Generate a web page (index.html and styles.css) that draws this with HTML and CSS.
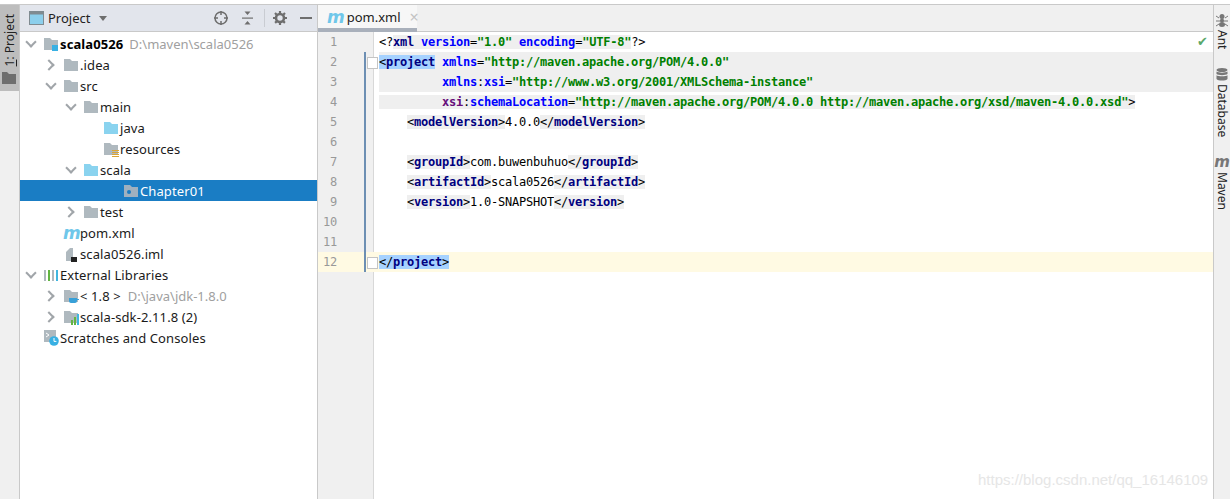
FILE: index.html
```html
<!DOCTYPE html>
<html lang="en">
  <head>
    <meta charset="UTF-8" />
    <title>pom.xml - scala0526</title>
    <link rel="stylesheet" href="styles.css">
  </head>
  <body>
    <svg class="defs" width="0" height="0">
      <symbol id="folder" viewBox="0 0 16 16"><path d="M1 2h6l2 2h6v10H1z" /></symbol>
    </svg>

    <div class="ide">
      <aside class="left-strip">
        <div class="strip-btn">
          <span class="strip-label"><u>1</u>: Project</span>
          <svg class="strip-folder" width="14" height="12" viewBox="0 0 14 12"><path d="M0 0h5l2 2h7v10H0z" fill="#6e6e6e" /></svg>
        </div>
      </aside>

      <section class="project">
        <header class="project-head">
          <svg class="head-view" width="15" height="14" viewBox="0 0 15 14"><rect x=".5" y=".5" width="14" height="13" fill="#8ccfec" stroke="#7f8b91" /><rect x="1" y="1" width="13" height="2.5" fill="#7f8b91" /></svg>
          <span class="head-title">Project</span>
          <svg class="head-caret" width="8" height="5" viewBox="0 0 8 5"><path d="M0 0h8L4 5z" fill="#6e6e6e" /></svg>
          <svg class="head-icon target" width="16" height="16" viewBox="0 0 16 16" fill="none" stroke="#6e6e6e" stroke-width="1.5"><circle cx="8" cy="8" r="6" /><path d="M8 1v4M8 11v4M1 8h4M11 8h4" /></svg>
          <svg class="head-icon collapse" width="13" height="14" viewBox="0 0 13 14"><path d="M1 6.5h11v1.2H1z" fill="#6e6e6e" /><path d="M3.5 0.5h6L6.5 4zM3.5 13.5h6L6.5 10z" fill="#6e6e6e" /></svg>
          <span class="head-sep"></span>
          <svg class="head-icon gear" width="14" height="14" viewBox="0 0 14 14"><circle cx="7" cy="7" r="4" fill="none" stroke="#6e6e6e" stroke-width="2.6" /><path d="M7 0v14M0 7h14M2 2l10 10M12 2L2 12" stroke="#6e6e6e" stroke-width="2.2" stroke-dasharray="2.4 9.2 2.4" /></svg>
          <span class="head-minus"></span>
        </header>

        <ul class="tree">
          <li class="row d0"><span class="arrow open"></span><span class="ico"><svg width="16" height="16"><use href="#folder" fill="#afb9bf" /><rect x="9" y="9" width="6" height="6" fill="#38b0e3" /></svg></span><b class="name">scala0526</b><span class="path">D:\maven\scala0526</span></li>
          <li class="row d1"><span class="arrow shut"></span><span class="ico"><svg width="16" height="16"><use href="#folder" fill="#afb9bf" /></svg></span><span class="name">.idea</span></li>
          <li class="row d1"><span class="arrow open"></span><span class="ico"><svg width="16" height="16"><use href="#folder" fill="#afb9bf" /></svg></span><span class="name">src</span></li>
          <li class="row d2"><span class="arrow open"></span><span class="ico"><svg width="16" height="16"><use href="#folder" fill="#afb9bf" /></svg></span><span class="name">main</span></li>
          <li class="row d3"><span class="arrow"></span><span class="ico"><svg width="16" height="16"><use href="#folder" fill="#8ad3ef" /></svg></span><span class="name">java</span></li>
          <li class="row d3"><span class="arrow"></span><span class="ico"><svg width="16" height="16"><use href="#folder" fill="#afb9bf" /><path d="M9 9h7v1H9zM9 11h7v1H9zM9 13h7v1H9zM9 15h7v1H9z" fill="#dba535" /></svg></span><span class="name">resources</span></li>
          <li class="row d2"><span class="arrow open"></span><span class="ico"><svg width="16" height="16"><use href="#folder" fill="#8ad3ef" /></svg></span><span class="name">scala</span></li>
          <li class="row d3 pkg selected"><span class="arrow"></span><span class="ico"><svg width="16" height="16"><use href="#folder" fill="#9fb0bf" /><circle cx="6" cy="9" r="2" fill="#1a7dc4" /></svg></span><span class="name">Chapter01</span></li>
          <li class="row d2"><span class="arrow shut"></span><span class="ico"><svg width="16" height="16"><use href="#folder" fill="#afb9bf" /></svg></span><span class="name">test</span></li>
          <li class="row d1"><span class="arrow"></span><span class="ico"><i class="m-icon">m</i></span><span class="name">pom.xml</span></li>
          <li class="row d1"><span class="arrow"></span><span class="ico"><svg width="16" height="16"><path d="M3 6l4-4h3v13H3z" fill="#afb9bf" /><rect x="8" y="11" width="6" height="5" fill="#222" /></svg></span><span class="name">scala0526.iml</span></li>
          <li class="row d0"><span class="arrow open"></span><span class="ico"><svg width="16" height="16"><path d="M1 3h2v11H1z" fill="#afb9bf" /><path d="M5 3h2v11H5z" fill="#62b543" /><path d="M9 3h2v11H9z" fill="#afb9bf" /><path d="M13 3h2v11h-2z" fill="#40b6e0" /></svg></span><span class="name">External Libraries</span></li>
          <li class="row d1"><span class="arrow shut"></span><span class="ico"><svg width="16" height="16"><use href="#folder" fill="#afb9bf" /><path d="M6 10h8v3a2 2 0 0 1-2 2H8a2 2 0 0 1-2-2zM14 11h2v1h-2z" fill="#38a0d8" /></svg></span><span class="name jdk">&lt; 1.8 &gt;</span><span class="path jdk-path">D:\java\jdk-1.8.0</span></li>
          <li class="row d1"><span class="arrow shut"></span><span class="ico"><svg width="16" height="16"><use href="#folder" fill="#afb9bf" /><path d="M8 11h2v5H8z" fill="#62b543" /><path d="M11 8h2v8h-2z" fill="#62b543" /><path d="M14 5h2v11h-2z" fill="#40b6e0" /></svg></span><span class="name">scala-sdk-2.11.8 (2)</span></li>
          <li class="row d0"><span class="arrow"></span><span class="ico"><svg width="16" height="16"><path d="M1 0h12v9H9v3H1z" fill="#afb9bf" /><path d="M3 3l3 2-3 2" fill="none" stroke="#fff" /><circle cx="11" cy="11" r="4.8" fill="#38b0e3" /><path d="M11 8v3.4h2.4" fill="none" stroke="#fff" /></svg></span><span class="name">Scratches and Consoles</span></li>
        </ul>
      </section>

      <main class="editor">
        <div class="tabs">
          <div class="tab"><i class="m-icon">m</i><span class="tab-name">pom.xml</span><span class="tab-close">&times;</span></div>
        </div>
        <div class="code">
          <span class="status-ok">&#10004;</span>
          <div class="line"><span class="num">1</span><pre><span class="pi">&lt;?</span><span class="hl"><b class="t">xml</b> <b class="a">version</b>=<b class="v">"1.0"</b> <b class="a">encoding</b>=<b class="v">"UTF-8"</b></span><span class="pi">?&gt;</span></pre></div>
          <div class="line bar full fold-top"><span class="num">2</span><pre><span class="sel"><span class="pi">&lt;</span><b class="t">project</b></span> <b class="a">xmlns</b>=<b class="v">"http://maven.apache.org/POM/4.0.0"</b></pre></div>
          <div class="line bar full"><span class="num">3</span><pre>         <b class="a">xmlns</b>:<b class="a">xsi</b>=<b class="v">"http://www.w3.org/2001/XMLSchema-instance"</b></pre></div>
          <div class="line bar"><span class="num">4</span><pre><span class="hl">         <b class="ns">xsi</b>:<b class="a">schemaLocation</b>=<b class="v">"http://maven.apache.org/POM/4.0.0 http://maven.apache.org/xsd/maven-4.0.0.xsd"</b>&gt;</span></pre></div>
          <div class="line bar"><span class="num">5</span><pre>    <span class="hl">&lt;<b class="t">modelVersion</b>&gt;</span>4.0.0<span class="hl">&lt;/<b class="t">modelVersion</b>&gt;</span></pre></div>
          <div class="line bar"><span class="num">6</span><pre> </pre></div>
          <div class="line bar"><span class="num">7</span><pre>    <span class="hl">&lt;<b class="t">groupId</b>&gt;</span>com.buwenbuhuo<span class="hl">&lt;/<b class="t">groupId</b>&gt;</span></pre></div>
          <div class="line bar"><span class="num">8</span><pre>    <span class="hl">&lt;<b class="t">artifactId</b>&gt;</span>scala0526<span class="hl">&lt;/<b class="t">artifactId</b>&gt;</span></pre></div>
          <div class="line bar"><span class="num">9</span><pre>    <span class="hl">&lt;<b class="t">version</b>&gt;</span>1.0-SNAPSHOT<span class="hl">&lt;/<b class="t">version</b>&gt;</span></pre></div>
          <div class="line bar"><span class="num">10</span><pre> </pre></div>
          <div class="line bar"><span class="num">11</span><pre> </pre></div>
          <div class="line bar caret fold-end"><span class="num">12</span><pre><span class="sel">&lt;/<b class="t">project</b>&gt;</span></pre></div>
        </div>
      </main>

      <aside class="right-strip">
        <div class="side-item ant">
          <svg width="12" height="13" viewBox="0 0 12 13" fill="#777"><ellipse cx="6" cy="2.5" rx="2.5" ry="2.5" /><ellipse cx="6" cy="6.5" rx="2" ry="2" /><ellipse cx="6" cy="10.5" rx="3" ry="2.5" /><path d="M0 2l3 2M12 2L9 4M0 7h12M0 12l3-2M12 12l-3-2" stroke="#777" /></svg>
          <span class="side-label">Ant</span>
        </div>
        <div class="side-item db">
          <svg width="12" height="13" viewBox="0 0 12 13" fill="#777"><ellipse cx="6" cy="2" rx="5.5" ry="2" /><path d="M.5 3.5C2 5 10 5 11.5 3.5V6C10 7.500 2 7.500.5 6zM.5 7.200C2 8.700 10 8.700 11.500 7.200V11C10 13 2 13 .5 11z" /></svg>
          <span class="side-label">Database</span>
        </div>
        <div class="side-item mvn">
          <i class="side-m">m</i>
          <span class="side-label">Maven</span>
        </div>
      </aside>
    </div>

    <div class="watermark">https://blog.csdn.net/qq_16146109</div>
  </body>
</html>
```

FILE: styles.css
```css
* {
  box-sizing: border-box;
  margin: 0;
  padding: 0;
}

html,
body {
  width: 1230px;
  height: 499px;
  overflow: hidden;
  background: #ffffff;
}

body {
  position: relative;
  padding-top: 4px;
  font-family: "Noto Sans", sans-serif;
  font-size: 13px;
  color: #1a1a1a;
}

.defs {
  position: absolute;
}

.ide {
  display: flex;
  height: 495px;
  border-top: 1px solid #c9c9c9;
}

/* Left tool strip */
.left-strip {
  flex: 0 0 20px;
  background: #f0f0f0;
  border-right: 1px solid #c9c9c9;
}

.strip-btn {
  height: 86px;
  background: #bdbdbd;
  display: flex;
  flex-direction: column;
  align-items: center;
  padding-top: 9px;
  gap: 6px;
}

.strip-label {
  writing-mode: vertical-rl;
  transform: rotate(180deg);
  font-size: 12px;
  line-height: 18px;
  color: #222;
}

.strip-folder {
  margin-right: 1px;
}

/* Project panel */
.project {
  flex: 0 0 298px;
  border-right: 1px solid #c9c9c9;
  background: #ffffff;
}

.project-head {
  height: 27px;
  background: #e2e5ec;
  border-bottom: 1px solid #c9c9c9;
  display: flex;
  align-items: center;
  padding-left: 9px;
}

.head-title {
  margin-left: 4px;
  margin-right: 9px;
  color: #222;
}

.head-icon {
  flex: none;
}

.target {
  margin-left: 106px;
}

.collapse {
  margin-left: 12px;
}

.head-sep {
  width: 1px;
  height: 18px;
  background: #c9ccd2;
  margin-left: 10px;
}

.gear {
  margin-left: 8px;
}

.head-minus {
  width: 12px;
  height: 2px;
  background: #6e6e6e;
  margin-left: 13px;
}

.tree {
  list-style: none;
  padding-top: 1px;
}

.row {
  display: flex;
  align-items: center;
  height: 21px;
  white-space: nowrap;
}

.d0 {
  padding-left: 2px;
}

.d1 {
  padding-left: 22px;
}

.d2 {
  padding-left: 42px;
}

.d3 {
  padding-left: 62px;
}

.pkg {
  padding-left: 82px;
}

.arrow {
  flex: 0 0 21px;
  height: 21px;
  position: relative;
}

.arrow::before {
  content: "";
  position: absolute;
  width: 6px;
  height: 6px;
  border-right: 2px solid #a0a5a9;
  border-bottom: 2px solid #a0a5a9;
}

.arrow.open::before {
  left: 5px;
  top: 5px;
  transform: rotate(45deg);
}

.arrow.shut::before {
  left: 3px;
  top: 7px;
  transform: rotate(-45deg);
}

.arrow:not(.open):not(.shut)::before {
  display: none;
}

.ico {
  flex: 0 0 17px;
  height: 16px;
  display: flex;
  align-items: center;
}

.m-icon {
  font-family: "DejaVu Sans", sans-serif;
  font-weight: bold;
  font-style: italic;
  font-size: 17px;
  line-height: 16px;
  color: #6fc7ea;
  letter-spacing: -1px;
}

.name {
  color: #1a1a1a;
  letter-spacing: 0.1px;
}

b.name {
  font-weight: bold;
  color: #000;
}

.path {
  margin-left: 6px;
  color: #a0a0a0;
}

.jdk-path {
  margin-left: 7px;
}

.selected {
  background: #1a7dc4;
}

.selected .name {
  color: #ffffff;
}

/* Editor */
.editor {
  flex: 0 0 895px;
  display: flex;
  flex-direction: column;
}

.tabs {
  height: 27px;
  background: #f0f0f0;
  border-bottom: 1px solid #c9c9c9;
  display: flex;
}

.tab {
  width: 99px;
  height: 27px;
  background: #f7f7f7;
  border-bottom: 4px solid #a9b0bb;
  display: flex;
  align-items: center;
  padding-left: 9px;
  gap: 3px;
}

.tab-name {
  color: #222;
}

.tab-close {
  margin-left: 6px;
  color: #c4c4c4;
  font-size: 16px;
}

.code {
  flex: 1;
  position: relative;
  background: linear-gradient(to right, #f0f0f0 55px, #d8d8d8 55px, #d8d8d8 56px, #ffffff 56px);
}

.status-ok {
  position: absolute;
  top: 0;
  right: 5px;
  font-size: 13px;
  color: #59a869;
}

.line {
  display: flex;
  height: 20px;
  line-height: 20px;
  position: relative;
}

.num {
  flex: 0 0 61px;
  padding-right: 42px;
  text-align: right;
  font-family: "DejaVu Sans Mono", monospace;
  font-size: 12px;
  letter-spacing: -0.22px;
  color: #999999;
}

pre {
  flex: 1;
  font-family: "DejaVu Sans Mono", monospace;
  font-size: 12px;
  letter-spacing: -0.224px;
  color: #000;
}

.bar::before {
  content: "";
  position: absolute;
  left: 46px;
  top: 0;
  bottom: 0;
  width: 2px;
  background: #6d8fb3;
}

.full pre {
  background: #efefef;
}

.hl {
  background: #efefef;
}

.sel {
  background: #a6d2ff;
}

.caret {
  background: #fffae3;
}

.fold-top::after,
.fold-end::after {
  content: "";
  position: absolute;
  left: 49px;
  top: 5px;
  width: 9px;
  height: 10px;
  background: #ffffff;
  border: 1px solid #c4c4c4;
}

.t {
  color: #000080;
}

.a {
  color: #0000ff;
}

.ns {
  color: #660e7a;
}

.v {
  color: #008000;
}

.pi {
  color: #000;
}

/* Right tool strip */
.right-strip {
  flex: 0 0 17px;
  background: #f0f0f0;
  border-left: 1px solid #c9c9c9;
  display: flex;
  flex-direction: column;
  align-items: center;
  padding-top: 9px;
}

.side-item {
  display: flex;
  flex-direction: column;
  align-items: center;
  gap: 3px;
}

.db {
  margin-top: 19px;
}

.mvn {
  margin-top: 17px;
}

.side-label {
  writing-mode: vertical-rl;
  font-size: 12px;
  line-height: 14px;
  color: #222;
}

.side-m {
  font-family: "DejaVu Sans", sans-serif;
  font-weight: bold;
  font-style: italic;
  font-size: 15px;
  line-height: 14px;
  color: #777;
}

.watermark {
  position: absolute;
  left: 978px;
  top: 471px;
  font-family: "Liberation Sans", sans-serif;
  font-size: 15px;
  color: #e6e6e6;
}
```
